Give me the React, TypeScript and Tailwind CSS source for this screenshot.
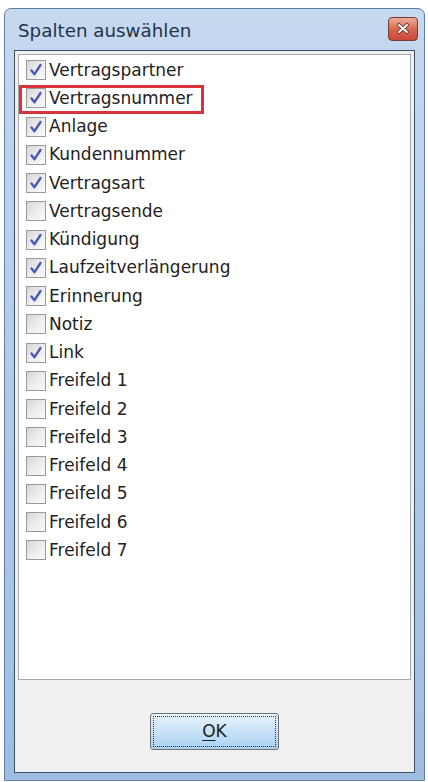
import React from 'react';

const items: [string, boolean][] = [
  ['Vertragspartner', true],
  ['Vertragsnummer', true],
  ['Anlage', true],
  ['Kundennummer', true],
  ['Vertragsart', true],
  ['Vertragsende', false],
  ['Kündigung', true],
  ['Laufzeitverlängerung', true],
  ['Erinnerung', true],
  ['Notiz', false],
  ['Link', true],
  ['Freifeld 1', false],
  ['Freifeld 2', false],
  ['Freifeld 3', false],
  ['Freifeld 4', false],
  ['Freifeld 5', false],
  ['Freifeld 6', false],
  ['Freifeld 7', false],
];

function CheckBox({ checked }: { checked: boolean }) {
  return (
    <span className="w-[20px] h-[20px] shrink-0 border border-[#9a9a9a] bg-gradient-to-br from-[#d6d6d6] via-[#ececec] to-[#fafafa] flex items-center justify-center">
      {checked && (
        <svg width="14" height="14" viewBox="0 0 14 14">
          <path d="M2.5 7.5 L5.5 11.2 L11.5 2" fill="none" stroke="#4b5bb5" strokeWidth="2.4" strokeLinecap="round" strokeLinejoin="round" />
        </svg>
      )}
    </span>
  );
}

export default function App() {
  return (
    <div className="w-[428px] h-[782px] bg-white pt-[8px] pl-[4px]" style={{ fontFamily: '"DejaVu Sans", Verdana, sans-serif' }}>
      <div className="w-[421px] h-[773px] border border-[#5f7ea6] rounded-t-[7px] bg-gradient-to-b from-[#c5d9ef] via-[#aecbea] to-[#9fbde2] flex flex-col px-[9px] pb-[7px]">
        <div className="h-[41px] flex items-center justify-between pl-[4px] pt-[3px]">
          <span className="text-[18.3px] text-[#24344a]">Spalten auswählen</span>
          <span className="w-[30px] h-[24px] mr-[-3px] mt-[-5px] rounded-[4px] border border-[#7a3a32] bg-gradient-to-b from-[#eab0a0] via-[#d6674f] to-[#c9483c] flex items-center justify-center">
            <svg width="12" height="11" viewBox="0 0 12 11">
              <path d="M2 2 L10 9 M10 2 L2 9" stroke="#5a2a24" strokeWidth="3.6" strokeLinecap="round" />
              <path d="M2 2 L10 9 M10 2 L2 9" stroke="#ffffff" strokeWidth="2" strokeLinecap="round" />
            </svg>
          </span>
        </div>
        <div className="flex-1 border border-[#3d4f67] bg-[#f0f0f0] flex flex-col p-[3px] pb-0">
          <div className="h-[626px] border border-[#a8a8a8] bg-white pt-[1px]">
            {items.map(([label, checked], i) => (
              <div key={label} className="relative h-[28.25px] flex items-center gap-[3px] pl-[7px]">
                {i === 1 && (
                  <span className="absolute left-0 top-[1px] w-[185px] h-[29px] border-[3px] border-[#d8333b]" />
                )}
                <CheckBox checked={checked} />
                <span className="text-[17px] text-[#222222] leading-none">{label}</span>
              </div>
            ))}
          </div>
          <div className="flex-1 flex justify-center pt-[33px]">
            <button className="w-[129px] h-[37px] rounded-[3px] border border-[#707070] bg-gradient-to-b from-[#e8f3fc] via-[#c9e2f7] to-[#a9d0f0] p-[2px]">
              <span className="w-full h-full border border-dotted border-[#333333] flex items-center justify-center text-[17px] text-[#1e1e1e]">
                <span className="underline underline-offset-[3px]">O</span>K
              </span>
            </button>
          </div>
        </div>
      </div>
    </div>
  );
}
